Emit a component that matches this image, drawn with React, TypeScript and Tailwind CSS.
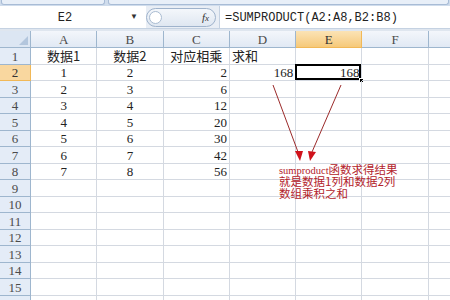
import React from 'react'

const cols = ['A', 'B', 'C', 'D', 'E', 'F', '']

const data: Record<number, string[]> = {
  1: ['数据1', '数据2', '对应相乘', '求和', '', '', ''],
  2: ['1', '2', '2', '168', '168', '', ''],
  3: ['2', '3', '6', '', '', '', ''],
  4: ['3', '4', '12', '', '', '', ''],
  5: ['4', '5', '20', '', '', '', ''],
  6: ['5', '6', '30', '', '', '', ''],
  7: ['6', '7', '42', '', '', '', ''],
  8: ['7', '8', '56', '', '', '', ''],
}

const rows = Array.from({ length: 16 }, (_, i) => i + 1)

function cellAlign(row: number, col: number) {
  if (row === 1) return col === 3 ? 'justify-start pl-[2px]' : 'justify-center'
  if (col === 0 || col === 1) return 'justify-center'
  return 'justify-end pr-[2px]'
}

export default function App() {
  return (
    <div className="relative w-[450px] h-[300px] overflow-hidden bg-white text-[#222] font-['Liberation_Serif','Noto_Sans_CJK_SC',serif]">
      {/* ribbon leftovers */}
      <div className="flex h-[6px] bg-[#cfdcec] gap-[3px] px-[1px]">
        <div className="w-[104px] h-[5px] rounded-b-[3px] border border-t-0 border-[#a8bcd6] bg-[#e8eff8]" />
        <div className="flex-1 h-[5px] rounded-b-[3px] border border-t-0 border-[#a8bcd6] bg-[#e8eff8]" />
      </div>

      {/* formula bar */}
      <div className="flex items-center h-[23px] bg-[#e9eef5] border-b border-[#c5d2e2]">
        <div className="flex items-center h-full w-[146px] bg-white">
          <span className="w-[130px] text-center text-[12px] pt-[2px] font-['Liberation_Mono',monospace]">E2</span>
          <span className="text-[8px] text-[#333]">▼</span>
        </div>
        <div className="relative flex items-center justify-end h-[19px] w-[70px] rounded-full border border-[#9fb3cc] bg-gradient-to-b from-[#f4f7fb] to-[#dfe7f1] pr-[6px]">
          <div className="absolute left-[2px] top-[2px] w-[13px] h-[13px] rounded-full border border-[#a9bbd1] bg-white" />
          <span className="italic text-[11px] text-[#333]">f<span className="text-[9px]">x</span></span>
        </div>
        <div className="flex items-center h-full flex-1 ml-[3px] pl-[5px] bg-white border-l border-[#c5d2e2] text-[12px] pt-[2px] font-['Liberation_Mono',monospace]">
          =SUMPRODUCT(A2:A8,B2:B8)
        </div>
      </div>

      <div className="h-[2px] bg-[#dfe6ef]" />

      {/* grid */}
      <div className="flex flex-col">
        <div className="flex h-[17px]">
          <div className="relative w-[31px] shrink-0 bg-[#dce6f3] border-r border-b border-[#9eb6ce]">
            <div className="absolute right-[2px] bottom-[2px] w-0 h-0 border-l-[9px] border-l-transparent border-b-[9px] border-b-[#b3c6dd]" />
          </div>
          {cols.map((c, i) => (
            <div
              key={i}
              className={`flex items-center justify-center w-[66.3px] shrink-0 border-r border-b text-[13px] pt-[1px] ${
                c === 'E'
                  ? 'bg-gradient-to-b from-[#fbe3b5] to-[#f6c979] border-[#f1b857] text-[#333]'
                  : 'bg-gradient-to-b from-[#f3f6fb] to-[#e1e9f4] border-[#9eb6ce] text-[#4b4b4b]'
              }`}
            >
              {c}
            </div>
          ))}
        </div>
        {rows.map((r) => (
          <div key={r} className="flex h-[16.5px]">
            <div
              className={`flex items-center justify-center w-[31px] shrink-0 border-r border-b text-[13px] pt-[1px] ${
                r === 2
                  ? 'bg-[#f9d79f] border-[#f1b857] text-[#333]'
                  : 'bg-[#e4ecf7] border-[#9eb6ce] text-[#4b4b4b]'
              }`}
            >
              {r}
            </div>
            {cols.map((_, ci) => {
              const v = data[r]?.[ci] ?? ''
              const sel = r === 2 && ci === 4
              return (
                <div
                  key={ci}
                  className={`relative flex items-center w-[66.3px] shrink-0 border-r border-b border-[#d4d9e1] text-[13px] ${cellAlign(r, ci)} ${
                    /[\u4e00-\u9fa5]/.test(v) ? "font-['Noto_Sans_CJK_SC',sans-serif] text-[12.5px] leading-none" : 'pt-[1px]'
                  }`}
                >
                  {v}
                  {sel && (
                    <>
                      <div className="absolute -left-[1px] -top-[1px] -right-[0px] -bottom-[0px] border-2 border-black" />
                      <div className="absolute -right-[3px] -bottom-[3px] w-[5px] h-[5px] bg-black border border-white" />
                    </>
                  )}
                </div>
              )
            })}
          </div>
        ))}
      </div>

      {/* annotation arrows */}
      <svg className="absolute left-0 top-0 pointer-events-none" width="450" height="300">
        <line x1="273" y1="85" x2="298" y2="152" stroke="#9b2a2a" strokeWidth="1" />
        <line x1="341" y1="85" x2="312" y2="152" stroke="#9b2a2a" strokeWidth="1" />
        <polygon points="295,151 303,151 300,161" fill="#d0121b" />
        <polygon points="308,151 316,152 310,161" fill="#d0121b" />
      </svg>

      {/* annotation text */}
      <div className="absolute left-[279px] top-[163px] flex flex-col text-[#b3232b] text-[11.5px] leading-[12px] font-['Noto_Sans_CJK_SC',sans-serif]">
        <span className="h-[12px] whitespace-nowrap">
          <span className="font-['Liberation_Serif',serif] text-[10.5px]">sumproduct</span>函数求得结果
        </span>
        <span className="h-[12px] whitespace-nowrap">就是数据1列和数据2列</span>
        <span className="h-[12px] whitespace-nowrap">数组乘积之和</span>
      </div>
    </div>
  )
}
